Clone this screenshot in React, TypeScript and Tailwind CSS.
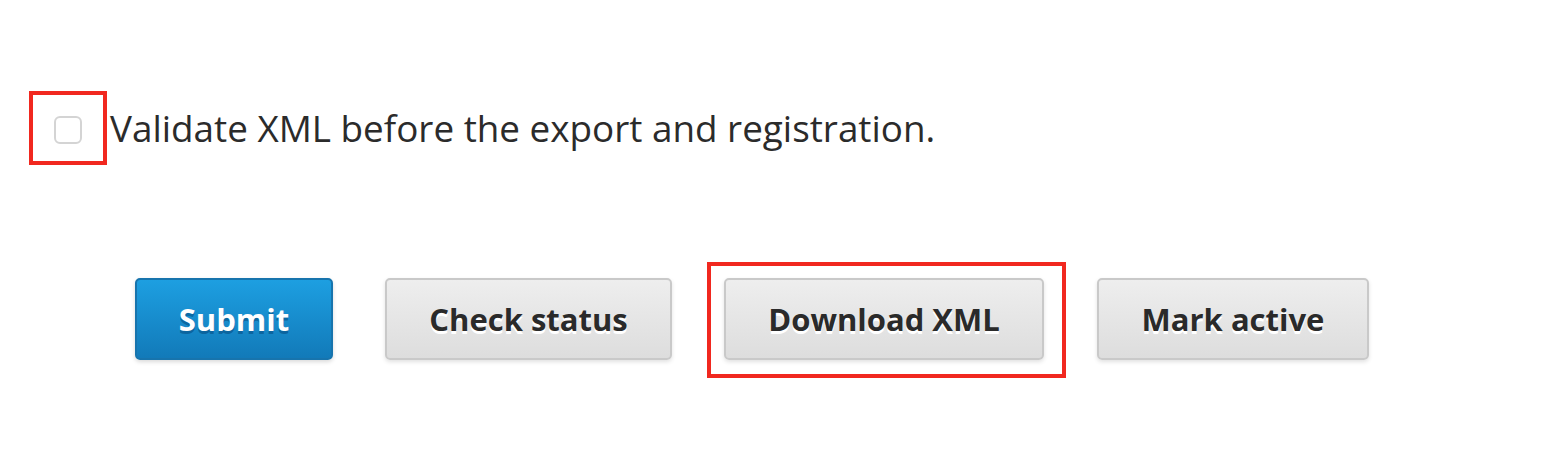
import React from "react";

const grayBtn =
  "h-[82px] rounded-[5px] border-2 border-[#c9c9c9] bg-gradient-to-b from-[#eeeeee] to-[#dddddd] text-[31px] font-bold text-[#2a2a2a] [text-shadow:0_3px_0_#ffffff] shadow-[0_2px_4px_rgba(0,0,0,0.12)]";

export default function App() {
  return (
    <div
      className="w-[1546px] h-[452px] bg-white"
      style={{ fontFamily: '"Open Sans", "Noto Sans", sans-serif' }}
    >
      <div className="flex items-center pt-[91px] pl-[29px]">
        <div className="flex h-[74px] w-[78px] items-center justify-center border-4 border-[#f1281f] pt-[3px]">
          <div className="h-[28px] w-[28px] rounded-[6px] border-2 border-[#d4d4d4] bg-white" />
        </div>
        <span className="ml-[3px] text-[36.85px] leading-none text-[#2b2b2b]">
          Validate XML before the export and registration.
        </span>
      </div>
      <div className="flex items-center gap-[52px] pl-[135px] pt-[113px]">
        <button className="h-[82px] w-[198px] rounded-[5px] border-2 border-[#1774ad] bg-gradient-to-b from-[#1d9fe1] to-[#127ab9] text-[31px] font-bold text-white [text-shadow:0_3px_0_rgba(0,60,110,0.45)] shadow-[0_2px_4px_rgba(0,0,0,0.15)]">
          Submit
        </button>
        <button className={grayBtn + " w-[287px]"}>Check status</button>
        <div className="relative">
          <button className={grayBtn + " w-[320px]"}>Download XML</button>
          <div className="pointer-events-none absolute left-[-17px] top-[-16px] h-[116px] w-[359px] border-4 border-[#f1281f]" />
        </div>
        <button className={grayBtn + " w-[272px] ml-[1px]"}>Mark active</button>
      </div>
    </div>
  );
}
